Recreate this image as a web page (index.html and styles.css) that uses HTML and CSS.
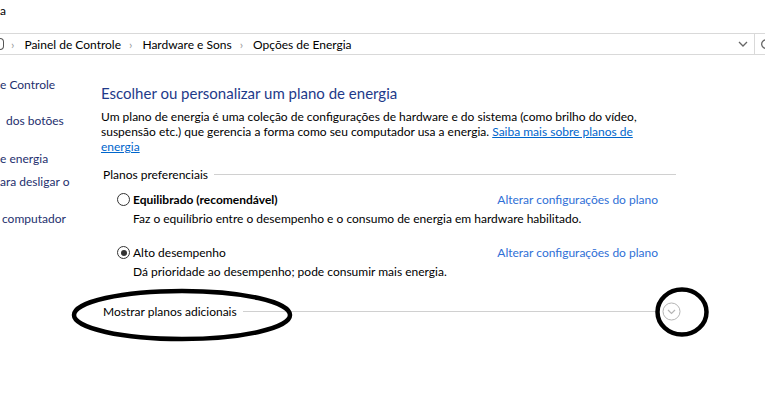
FILE: index.html
```html
<!DOCTYPE html>
<html lang="pt-BR">
<head>
    <meta charset="UTF-8">
    <title>Opções de Energia</title>
    <link rel="stylesheet" href="styles.css">
</head>
<body>
    <div class="titlebar">a</div>

    <div class="addressbar">
        <div class="crumbs">
            <span class="crumb-icon"></span>
            <span class="sep">›</span>
            <span>Painel de Controle</span>
            <span class="sep">›</span>
            <span>Hardware e Sons</span>
            <span class="sep">›</span>
            <span>Opções de Energia</span>
        </div>
        <div class="addr-tools">
            <svg class="drop" width="10" height="6" viewBox="0 0 10 6"><path d="M1 1 L5 5 L9 1" fill="none" stroke="#666" stroke-width="1.3"/></svg>
            <span class="addr-divider"></span>
            <svg class="refresh" width="12" height="12" viewBox="0 0 12 12"><path d="M9.5 4 A4.2 4.2 0 1 0 10 7" fill="none" stroke="#666" stroke-width="1.3"/><path d="M7 1.5 L10 1.5 L10 4.5" fill="none" stroke="#666" stroke-width="1.3"/></svg>
        </div>
    </div>

    <div class="window">
        <div class="sidebar">
            <div class="side-link s1">e Controle</div>
            <div class="side-link s2">dos botões</div>
            <div class="side-link s3">e energia</div>
            <div class="side-link s4">ara desligar o</div>
            <div class="side-link s5">computador</div>
        </div>

        <div class="main">
            <h1>Escolher ou personalizar um plano de energia</h1>
            <p class="intro">Um plano de energia é uma coleção de configurações de hardware e do sistema (como brilho do vídeo, suspensão etc.) que gerencia a forma como seu computador usa a energia. <a href="#">Saiba mais sobre planos de energia</a></p>

            <div class="group-title">
                <span>Planos preferenciais</span>
                <span class="rule"></span>
            </div>

            <div class="plan">
                <div class="plan-row">
                    <span class="radio"></span>
                    <span class="plan-name bold">Equilibrado (recomendável)</span>
                    <a class="plan-link" href="#">Alterar configurações do plano</a>
                </div>
                <div class="plan-desc">Faz o equilíbrio entre o desempenho e o consumo de energia em hardware habilitado.</div>
            </div>

            <div class="plan">
                <div class="plan-row">
                    <span class="radio checked"></span>
                    <span class="plan-name">Alto desempenho</span>
                    <a class="plan-link" href="#">Alterar configurações do plano</a>
                </div>
                <div class="plan-desc">Dá prioridade ao desempenho; pode consumir mais energia.</div>
            </div>

            <div class="more">
                <span>Mostrar planos adicionais</span>
                <span class="rule"></span>
                <svg class="more-btn" width="19" height="19" viewBox="0 0 19 19"><circle cx="9.5" cy="9.5" r="8.5" fill="none" stroke="#b5b5b5" stroke-width="1"/><path d="M6 8 L9.5 11.5 L13 8" fill="none" stroke="#b5b5b5" stroke-width="1.2"/></svg>
            </div>
        </div>
    </div>

    <!-- marcações feitas à mão por cima da captura -->
    <svg class="marks" width="765" height="416" viewBox="0 0 765 416">
        <ellipse cx="182" cy="315" rx="108" ry="24" fill="none" stroke="#000" stroke-width="4.5"/>
        <ellipse cx="682" cy="312" rx="24.5" ry="22.5" fill="none" stroke="#000" stroke-width="4.5"/>
    </svg>
</body>
</html>
```

FILE: styles.css
```css
body {
    margin: 0;
    width: 765px;
    height: 416px;
    overflow: hidden;
    background: #fff;
    font-family: Lato, "Noto Sans", sans-serif;
    font-size: 12px;
    color: #000;
    position: relative;
}
.titlebar {
    height: 33px;
    line-height: 22px;
    font-size: 12px;
}
.addressbar {
    height: 20px;
    border-top: 1px solid #d9d9d9;
    border-bottom: 1px solid #d9d9d9;
    display: flex;
    align-items: center;
    justify-content: space-between;
}
.crumbs {
    display: flex;
    align-items: center;
}
.crumb-icon {
    width: 3px;
    height: 10px;
    border: 1px solid #555;
    border-left: none;
    border-radius: 0 5px 5px 0;
    margin-right: -1px;
}
.sep {
    color: #9a9a9a;
    margin: 0 10px 0 8px;
}
.addr-tools {
    display: flex;
    align-items: center;
    height: 100%;
}
.drop {
    margin-right: 6px;
}
.addr-divider {
    width: 1px;
    height: 100%;
    background: #d9d9d9;
    margin-right: 5px;
}
.refresh {
    margin-right: -7px;
}
.window {
    display: flex;
}
.sidebar {
    width: 101px;
    flex: none;
    color: #1e2f6e;
    padding-top: 22px;
}
.side-link {
    line-height: 15px;
    white-space: nowrap;
}
.s2 { margin-top: 21px; padding-left: 6px; }
.s3 { margin-top: 23px; }
.s4 { margin-top: 8px; }
.s5 { margin-top: 22px; padding-left: 2px; }
.main {
    width: 580px;
    padding-top: 28px;
}
h1 {
    margin: 0;
    font-size: 15px;
    font-weight: normal;
    line-height: 20px;
    color: #1e3a8a;
}
.intro {
    margin: 6px 0 0;
    line-height: 15px;
    width: 560px;
}
a {
    color: #0066cc;
}
.group-title,
.more {
    display: flex;
    align-items: center;
    padding-left: 2px;
    line-height: 15px;
}
.group-title {
    margin-top: 13px;
    width: 573px;
}
.rule {
    flex: 1;
    height: 1px;
    background: #d0d0d0;
    margin-left: 6px;
}
.plan {
    padding-left: 16px;
    width: 541px;
}
.plan + .plan {
    margin-top: 19px;
}
.group-title + .plan {
    margin-top: 10px;
}
.plan-row {
    display: flex;
    align-items: center;
    line-height: 15px;
}
.radio {
    width: 11px;
    height: 11px;
    border: 1px solid #333;
    border-radius: 50%;
    margin-right: 3px;
    position: relative;
}
.radio.checked::after {
    content: "";
    position: absolute;
    left: 2.5px;
    top: 2.5px;
    width: 6px;
    height: 6px;
    border-radius: 50%;
    background: #333;
}
.bold {
    font-weight: bold;
}
.plan-link {
    margin-left: auto;
    color: #2f6fd6;
    text-decoration: none;
}
.plan-desc {
    padding-left: 16px;
    margin-top: 4px;
    line-height: 15px;
}
.more {
    margin-top: 23px;
    width: 578px;
}
.more-btn {
    margin-left: 6px;
}
.marks {
    position: absolute;
    left: 0;
    top: 0;
    pointer-events: none;
}
```
